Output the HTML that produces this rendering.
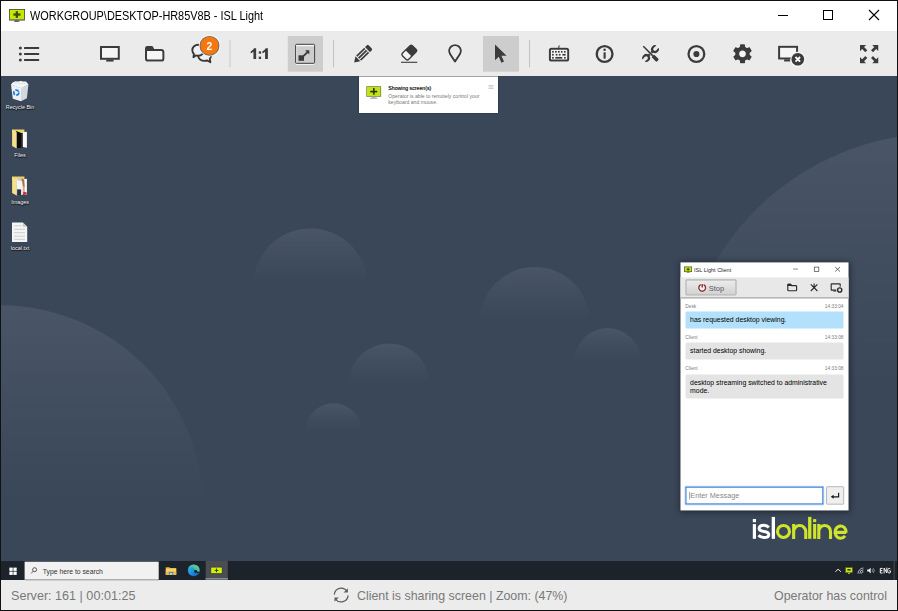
<!DOCTYPE html>
<html>
<head>
<meta charset="utf-8">
<title>ISL Light</title>
<style>
*{box-sizing:border-box;margin:0;padding:0}
html,body{width:898px;height:611px;overflow:hidden;background:#fff}
body{position:relative;font-family:"Liberation Sans",sans-serif;color:#000}
.abs{position:absolute}
#frame{position:absolute;left:0;top:0;width:898px;height:611px;border:1px solid #111;pointer-events:none;z-index:50}
#titlebar{position:absolute;left:1px;top:1px;width:896px;height:30px;background:#fff}
#title{position:absolute;left:29px;top:8px;font-size:12px;line-height:14px;white-space:nowrap;transform-origin:0 50%;transform:scaleX(.908);color:#000}
#toolbar{position:absolute;left:1px;top:31px;width:896px;height:45px;background:#ebebeb}
.tbact{position:absolute;top:5px;width:36px;height:36px;background:#cdcdcd}
.sep{position:absolute;top:9px;width:1px;height:28px;background:#c4c4c4}
.ico{position:absolute;overflow:visible}
#desk{position:absolute;left:1px;top:76px;width:896px;height:504px;background:#3a4759;overflow:hidden}
.bub{position:absolute;border-radius:50%}
#taskbar{position:absolute;left:0;top:485px;width:896px;height:19px;background:#1d232a}
#status{position:absolute;left:1px;top:580px;width:896px;height:30px;background:#ececec;color:#797979;font-size:12.4px;line-height:32px;white-space:nowrap}
.dl{position:absolute;color:#fff;font-size:5.4px;line-height:7px;white-space:nowrap;text-align:center;text-shadow:0 0 1px #000,0.5px 0.5px 1px #000}

#popup{position:absolute;left:357.7px;top:0;width:139.6px;height:36.6px;background:#fff;box-shadow:inset 0 1px 0 #a3a3a3,0 0 1.5px rgba(0,0,0,.5)}
#popup .t{position:absolute;left:29.6px;white-space:nowrap;font-size:5.2px;line-height:6.5px}
#cw{position:absolute;left:679px;top:186px;width:168px;height:247.5px;transform:translate(.5px,.4px);background:#fff;box-shadow:0 0 0 .6px #39424e,0 1px 6px 1px rgba(0,0,0,.45)}
#cw .tb{position:absolute;left:0;top:15px;width:168px;height:20.5px;background:#e8e8e8;border-bottom:1.2px solid #9b9b9b}
#cw .stop{position:absolute;left:5px;top:17.3px;width:51.4px;height:15.4px;border:.8px solid #a9a9a9;border-radius:1px;background:linear-gradient(#ececec,#d2d2d2)}
#cw .lbl{position:absolute;font-size:4.8px;line-height:6px;color:#7c7c7c;white-space:nowrap}
#cw .bb{position:absolute;left:4.9px;width:158.5px;border-radius:1.5px;background:#e4e4e4;font-size:6.88px;line-height:8px;color:#000;padding:4.9px 0 0 4.7px;white-space:nowrap}
</style>
</head>
<body>
<div id="titlebar">
  <div id="title">WORKGROUP\DESKTOP-HR85V8B - ISL Light</div>
</div>
<div id="toolbar"></div>
<div id="desk">
<svg class="abs" style="left:0;top:0" width="896" height="504" viewBox="1 76 896 504">
<defs><linearGradient id="bg" x1="0" y1="0" x2="0" y2="1"><stop offset="0" stop-color="#f4f7ff" stop-opacity=".084"/><stop offset=".25" stop-color="#f4f7ff" stop-opacity=".036"/><stop offset=".49" stop-color="#f4f7ff" stop-opacity="0"/></linearGradient></defs>
<circle cx="0" cy="508.6" r="203.3" fill="url(#bg)"/>
<circle cx="310.4" cy="285.5" r="57.1" fill="url(#bg)"/>
<circle cx="389.2" cy="383.9" r="40.5" fill="url(#bg)"/>
<circle cx="333.5" cy="431.3" r="28" fill="url(#bg)"/>
<circle cx="534.8" cy="322" r="55" fill="url(#bg)"/>
<circle cx="607.7" cy="361.6" r="33.5" fill="url(#bg)"/>
<circle cx="941" cy="395.5" r="262.3" fill="url(#bg)"/>

<!-- recycle bin -->
<g id="rbin">
<path d="M11,84.600 L21,88 L21,101.300 L12.800,98.800 Z" fill="#eef1f4"/>
<path d="M21,88 L28.400,84.600 L26.900,98.300 L21,101.300 Z" fill="#d3d8de"/>
<path d="M10.800,84.600 L13,82.300 L15.500,81.200 L18,81.600 L20.500,80.900 L23.500,81.600 L26,81.400 L28.500,84.600 L21,88.200 Z" fill="#f4f6f8"/>
<path d="M14,83.200 L17.500,82.600 L20,84 L23.500,82.800 L26,84" fill="none" stroke="#cfd4da" stroke-width=".6"/>
<circle cx="16.300" cy="92.600" r="2.500" fill="none" stroke="#1b7fe2" stroke-width="1.800" stroke-dasharray="3.900 1.340"/>
<circle cx="16.300" cy="92.600" r="1.200" fill="#eef1f4"/>
</g>
<!-- Files folder -->
<g id="ffold">
<path d="M12.100,129.500 L24.400,129.500 L24.400,133 L12.100,133 Z" fill="#efd06a"/>
<path d="M16.100,131 L23.200,133.800 L22.600,147.600 L16.500,148.300 Z" fill="#0a0a0a"/>
<path d="M21.400,134 L23,133 L22.800,147 L21.400,147.500 Z" fill="#555" opacity=".7"/>
<path d="M22.900,132.300 L26.900,131.800 L26.900,147.700 L22.900,146.900 Z" fill="#fbfbfb"/>
<path d="M12.100,129.800 L16.700,132.200 L16.700,148.500 L12.100,145.900 Z" fill="#f7e08d"/>
</g>
<!-- Images folder -->
<g id="ifold">
<path d="M12.100,176.500 L24.400,176.500 L24.400,180 L12.100,180 Z" fill="#efd06a"/>
<path d="M16.100,178 L23.200,180.600 L22.800,194.700 L16.500,195.300 Z" fill="#f4f4f6"/>
<path d="M22.900,179.300 L26.900,178.800 L26.900,194.700 L22.900,193.900 Z" fill="#fbfbfb"/>
<path d="M16.300,178.200 L21,178 L23.600,179.800 L22,181.200 L17.500,180.200 Z" fill="#cfc9c0"/>
<path d="M21.400,178.300 L24.200,179.500 L24.800,187 L23,187.500 L22.200,182 Z" fill="#b3703c"/>
<path d="M22.800,186.500 L24.600,186 L24.800,192.500 L23.200,192.500 Z" fill="#e8a070"/>
<path d="M17.200,189.300 L21.200,189.600 L21,195.100 L17,195.300 Z" fill="#2a3344"/>
<path d="M23.200,192 L26.600,192.300 L26.600,194.400 L23.200,194.200 Z" fill="#d8231c"/>
<path d="M12.100,176.800 L16.700,179.200 L16.700,195.500 L12.100,192.900 Z" fill="#f7e08d"/>
</g>
<!-- local.txt -->
<g id="ltxt">
<path d="M12,222.400 L22.800,222.400 L27.200,226.800 L27.200,242 L12,242 Z" fill="#f5f5f5"/>
<path d="M22.800,222.400 L22.800,226.800 L27.200,226.800 Z" fill="#c6c6c6"/>
<g stroke="#c2c2c2" stroke-width=".8"><path d="M14.200,225.800 h7.400 M14.200,229.300 h10.800 M14.200,232.700 h10.800 M14.200,236.200 h10.800 M14.200,239.300 h10.800"/></g>
</g>

</svg>
<div class="dl" style="left:-1px;top:28.100px;width:40px">Recycle Bin</div>
<div class="dl" style="left:-1px;top:75.700px;width:40px">Files</div>
<div class="dl" style="left:-1px;top:122.500px;width:40px">Images</div>
<div class="dl" style="left:-1px;top:169.400px;width:40px">local.txt</div>

<div id="popup">
<svg class="abs" style="left:0;top:0" width="140" height="37" viewBox="358.7 76 140 37">
<rect x="366.100" y="86.300" width="14.700" height="10.400" fill="#5d6a25"/>
<rect x="366.700" y="86.900" width="13.500" height="9.200" fill="#c0e31a"/>
<rect x="372.800" y="88" width="1.500" height="6.700" fill="#2c3000"/><rect x="370" y="90.800" width="6.900" height="1.600" fill="#2c3000"/>
<rect x="371.600" y="96.700" width="3.700" height="1.100" fill="#a9a9b8"/><rect x="369.800" y="97.800" width="7.500" height=".8" fill="#8d8d9f"/>
<rect x="488.200" y="85" width="5" height=".9" fill="#c9c9c9"/><rect x="488.200" y="86.500" width="5" height=".9" fill="#c9c9c9"/><rect x="488.200" y="88" width="5" height=".9" fill="#c9c9c9"/>
</svg>
<div class="t" style="top:8.700px;color:#2a2a2a;text-shadow:0 0 .2px #2e2e2e">Showing screen(s)</div>
<div class="t" style="top:16.600px;color:#777;font-size:5.120px">Operator is able to remotely control your<br>keyboard and mouse.</div>
</div>

<div id="cw">
<div class="tb"></div>
<div class="stop"></div>
<svg class="abs" style="left:0;top:0" width="168" height="248" viewBox="0 0 168 248">
<!-- title icon -->
<rect x="4" y="4.500" width="7.200" height="4.800" fill="#c1e612" stroke="#4a5418" stroke-width=".7"/>
<rect x="7.200" y="5.400" width=".8" height="3" fill="#222"/><rect x="6.100" y="6.500" width="3" height=".8" fill="#222"/>
<rect x="6.100" y="9.700" width="3" height=".6" fill="#555"/>
<!-- controls -->
<rect x="112.700" y="6.300" width="4.700" height=".7" fill="#555"/>
<rect x="133.800" y="4.700" width="4.500" height="4.400" fill="none" stroke="#444" stroke-width=".7"/>
<path d="M154.700,4.600 l4.800,4.600 M159.500,4.600 l-4.800,4.600" stroke="#333" stroke-width=".7" fill="none"/>
<!-- power icon -->
<circle cx="21.700" cy="25.300" r="4.600" fill="#f2f2f2" opacity=".8"/><g fill="none" stroke="#93333c" stroke-width="1.450"><path d="M20.300,22.300 a3.400,3.400 0 1 0 2.800,0"/><path d="M21.700,21.600 v3.500"/></g>
<!-- toolbar icons -->
<g fill="none" stroke="#2c2c2c" stroke-width="1.150">
<path d="M107.300,22.600 a.7,.7 0 0 1 .7,-.7 h2.200 l.9,1.300 h4.300 a.7,.7 0 0 1 .7,.7 v3.800 a.7,.7 0 0 1 -.7,.7 h-7.400 a.7,.7 0 0 1 -.7,-.7 z"/>
<path d="M130.300,22 l6.600,6.600 M136.900,22 l-6.600,6.600 M133.600,21 v4.300" stroke-width="1.150"/>
<rect x="150.700" y="21.500" width="9" height="6.200" rx=".4"/>
</g>
<path d="M106.900,23.500 v-1.300 a.8,.8 0 0 1 .8,-.8 h2.600 l1.300,2.100 z" fill="#2c2c2c"/>
<rect x="152.800" y="28.100" width="3.400" height="1" fill="#2c2c2c"/>
<circle cx="159.200" cy="27.600" r="3.500" fill="#e8e8e8"/><circle cx="159.200" cy="27.600" r="2.100" fill="none" stroke="#2c2c2c" stroke-width="1.400"/>
<!-- input -->
<rect x="5.400" y="224.700" width="137" height="16.900" fill="#fff" stroke="#2a73d6" stroke-width="1.150"/>
<rect x="4.600" y="223.900" width="138.600" height="18.500" fill="none" stroke="#8dbaf0" stroke-width=".7" rx=".8"/>
<rect x="8.500" y="229.400" width=".5" height="7.600" fill="#555"/>
<!-- send -->
<rect x="146" y="224.300" width="17.200" height="17.500" fill="#efefef" stroke="#9d9d9d" stroke-width=".7" rx=".6"/>
<path d="M158.100,230.400 V234.400 H152.500" fill="none" stroke="#1a1a1a" stroke-width="1.200"/><path d="M150.200,234.400 l2.900,-2 v4 z" fill="#1a1a1a"/>
</svg>
<div class="abs" style="left:13.600px;top:4.500px;font-size:5.500px;line-height:7px;white-space:nowrap;color:#2a2a2a">ISL Light Client</div>
<div class="abs" style="left:28.200px;top:21.700px;font-size:7.500px;line-height:9px;white-space:nowrap;color:#5a5a5a">Stop</div>
<div class="lbl" style="left:4.800px;top:41.500px">Desk</div><div class="lbl" style="right:5px;top:41.500px">14:33:04</div>
<div class="bb" style="top:49.100px;height:16.500px;background:#b3e0fb">has requested desktop viewing.</div>
<div class="lbl" style="left:4.800px;top:73px">Client</div><div class="lbl" style="right:5px;top:73px">14:33:08</div>
<div class="bb" style="top:80.200px;height:16.500px;padding-top:5.300px">started desktop showing.</div>
<div class="lbl" style="left:4.800px;top:104.200px">Client</div><div class="lbl" style="right:5px;top:104.200px">14:33:08</div>
<div class="bb" style="top:111.600px;height:24.500px;padding-top:5.700px">desktop streaming switched to administrative<br>mode.</div>
<div class="abs" style="left:9.800px;top:229.200px;font-size:7.300px;line-height:9px;white-space:nowrap;color:#888">Enter Message</div>
</div>

<svg class="abs" style="left:745px;top:436px" width="110" height="34" viewBox="746 512 110 34">
<g fill="#fff"><rect x="752.800" y="524.100" width="3.200" height="14.700"/><rect x="752.800" y="519" width="3.200" height="3.200"/><rect x="771.700" y="516.900" width="3.300" height="21.900"/></g>
<path d="M768.800,527.500 C767.600,526 765.900,525.300 763.900,525.300 C761,525.300 759.100,526.500 759.100,528.500 C759.100,530.400 760.800,531 764,531.400 C767.300,531.800 768.800,532.700 768.800,534.600 C768.800,536.600 766.900,537.600 764,537.600 C761.700,537.600 759.800,536.800 758.500,535.300" fill="none" stroke="#fff" stroke-width="3"/>
<g fill="#cfe42a"><rect x="808.100" y="516.900" width="3.300" height="21.900"/><rect x="813.100" y="524" width="3.100" height="14.800"/><rect x="813.100" y="519.100" width="3.100" height="3"/></g>
<g fill="none" stroke="#cfe42a" stroke-width="3.100">
<circle cx="783.500" cy="531.450" r="6"/>
<path d="M793.650,524 V538.900 M793.650,531.600 a6.050,6.050 0 0 1 12.100,0 V538.900"/>
<path d="M818.800,524 V538.900 M818.800,531.300 a5.850,5.850 0 0 1 11.700,0 V538.900"/>
<path d="M835.200,532.400 H846.200 M846.150,532.600 A5.550,6.100 0 1 0 845,535.900"/>
</g>
</svg>
<div id="taskbar">
<svg class="abs" style="left:0;top:0" width="896" height="19" viewBox="1 561 896 19">
<g fill="#fff"><rect x="9.400" y="567.600" width="3.300" height="3.300"/><rect x="13.400" y="567.600" width="3.300" height="3.300"/><rect x="9.400" y="571.600" width="3.300" height="3.300"/><rect x="13.400" y="571.600" width="3.300" height="3.300"/></g>
<rect x="24.600" y="561.700" width="134.100" height="17.600" fill="#f1f1f1"/><rect x="24.600" y="579.200" width="134.100" height=".8" fill="#c4c4c4"/>
<circle cx="34.600" cy="569.700" r="2" fill="none" stroke="#333" stroke-width=".8"/><path d="M33.200,571.200 l-2,2.200" stroke="#333" stroke-width=".8"/>
<!-- explorer -->
<path d="M165.800,567.200 h3.600 l.8,.8 h6 v6.800 h-10.400 z" fill="#e9a93a"/>
<rect x="165.800" y="568.600" width="10.400" height="6.200" fill="#f8d26a"/>
<rect x="165.800" y="571.600" width="10.400" height="3.200" fill="#f2b73c"/>
<rect x="168.800" y="571.800" width="4.400" height="3" fill="#3b8fe0"/><rect x="169.900" y="573" width="2.200" height="1.800" fill="#f8d26a"/>
<!-- edge -->
<defs><linearGradient id="eg" x1="0" y1="0" x2="1" y2="1"><stop offset="0" stop-color="#35c1f1"/><stop offset=".5" stop-color="#1f8fe0"/><stop offset="1" stop-color="#0c59a4"/></linearGradient>
<linearGradient id="eg2" x1="0" y1="1" x2="1" y2="0"><stop offset="0" stop-color="#1b9de2"/><stop offset="1" stop-color="#6fdc6a"/></linearGradient></defs>
<circle cx="193.800" cy="570.400" r="5.900" fill="url(#eg)"/>
<path d="M188.100,569 a5.900,5.900 0 0 1 11.500,1 c0,2 -1.600,2.900 -3.300,2.900 c-1.600,0 -2.600,-.6 -2.600,-1.300 c0,-.7 .8,-.9 .8,-2 c0,-1.300 -1.300,-2.300 -3,-2.300 c-1.500,0 -2.800,.7 -3.400,1.700 z" fill="url(#eg2)"/>
<path d="M194.300,571.300 a1.500,1.500 0 0 0 2.600,1 l2.200,-.4 l-1.500,2 a5,5 0 0 1 -3,1 z" fill="#1d232a" opacity=".0"/><circle cx="195.600" cy="571.300" r="1.600" fill="#1d232a"/><path d="M195.600,572.900 h3.800 l-1.200,-1.700 z" fill="#1d232a"/>
<!-- isl active -->
<rect x="205.700" y="561" width="22.100" height="18.500" fill="#4a4e53"/>
<rect x="205.500" y="578.300" width="22.500" height="1.200" fill="#9fa4a9"/>
<rect x="210.800" y="567.100" width="11.400" height="6.600" fill="#d3ee0a" stroke="#2d3140" stroke-width=".7"/>
<rect x="216" y="568.600" width="1" height="3.600" fill="#3a3d00"/><rect x="214.700" y="569.900" width="3.600" height="1" fill="#3a3d00"/>
<!-- tray -->
<path d="M835.300,571.800 l2.800,-2.600 l2.800,2.600" fill="none" stroke="#fff" stroke-width=".9"/>
<rect x="845.600" y="567.600" width="6.800" height="5" fill="#cfe915" stroke="#59661b" stroke-width=".5"/><rect x="847.400" y="569" width="3.200" height="1.600" fill="#333"/><rect x="848" y="573" width="2" height=".8" fill="#c4e021"/>
<g fill="none" stroke="#dfe3e8" stroke-width=".8"><path d="M858,573.600 a5.600,5.600 0 0 1 5.400,-5.600"/><path d="M859.800,573.600 a3.800,3.800 0 0 1 3.600,-3.800"/><path d="M861.500,573.600 a2,2 0 0 1 1.900,-2"/></g>
<path d="M867.200,569.600 h1.500 l2,-1.800 v5.600 l-2,-1.800 h-1.500 z" fill="#e8ebee"/><path d="M872,569.200 a2,2 0 0 1 0,2.800 M873.200,568.200 a3.500,3.500 0 0 1 0,4.800" fill="none" stroke="#cfd3d8" stroke-width=".6"/>
<g fill="none" stroke="#fff" stroke-width=".95">
<path d="M882.600,568.400 h-2.300 v4.600 h2.300 M880.300,570.600 h2"/>
<path d="M884.100,573.400 v-5.400 l2.700,5 v-5.400" stroke-linejoin="bevel"/>
<path d="M890.500,569.200 a1.600,1.600 0 0 0 -1.300,-.8 c-1,0 -1.500,.9 -1.500,2.300 c0,1.400 .5,2.300 1.500,2.300 c.7,0 1.300,-.4 1.300,-1 v-1.100 h-1.300"/>
</g>
<rect x="893.800" y="561" width=".6" height="19" fill="#5d646d"/>
</svg>
<div class="abs" style="left:41.800px;top:6px;font-size:6.800px;line-height:9px;white-space:nowrap;color:#333">Type here to search</div>

</div>
</div>
<div id="status"><div class="abs" style="left:23.600px;top:0;width:134.100px;height:.7px;background:#cfcfcf"></div>
  <span class="abs" style="left:10px;font-size:12.600px">Server: 161 | 00:01:25</span>
  <svg class="abs" style="left:332px;top:7px" width="18" height="16" viewBox="333 587 18 16">
<g fill="none" stroke="#5e5e5e" stroke-width="1.200">
<path d="M334.300,594.600 a6.900,6.900 0 0 1 12.700,-3.300"/>
<path d="M348.100,595.400 a6.900,6.900 0 0 1 -12.700,3.300"/>
</g>
<path d="M347.900,588.300 v4.300 h-4.300 z" fill="#5e5e5e"/>
<path d="M334.500,601.700 v-4.300 h4.300 z" fill="#5e5e5e"/>
</svg>
<span class="abs" style="left:356px">Client is sharing screen | Zoom: (47%)</span>
  <span class="abs" style="right:10px">Operator has control</span>
</div>
<svg class="abs" style="left:0;top:0;z-index:5" width="898" height="76" viewBox="0 0 898 76">
<g fill="#3b3b3b" stroke="none" style="filter:drop-shadow(0 0 .7px #fff) drop-shadow(0 0 .6px rgba(255,255,255,.85))">
<!-- title icon -->
<g id="ticon">
<rect x="9" y="9" width="16" height="11.400" fill="#45454d"/>
<rect x="9.800" y="9.800" width="14.400" height="9.600" fill="#c4e800"/>
<rect x="9" y="19.400" width="16" height="1.100" fill="#858585"/>
<rect x="15.700" y="11.200" width="2.300" height="6.700" fill="#454a00"/><rect x="13.400" y="13.400" width="7.100" height="2.300" fill="#454a00"/>
<rect x="13.900" y="20.500" width="5.800" height="1.200" fill="#777"/><rect x="15" y="20.500" width="3.400" height="1.200" fill="#4a4a4a"/>
</g>
<!-- window controls -->
<rect x="778" y="15" width="10" height="1" fill="#000"/>
<rect x="823.5" y="10.5" width="9" height="9" fill="none" stroke="#000" stroke-width="1"/>
<path d="M869,10 L879,20 M879,10 L869,20" stroke="#000" stroke-width="1.1" fill="none"/>
<!-- list -->
<circle cx="20.4" cy="48" r="1.5"/><circle cx="20.4" cy="54" r="1.5"/><circle cx="20.4" cy="60" r="1.5"/>
<rect x="24" y="47" width="15.2" height="2" rx=".6"/><rect x="24" y="53" width="15.2" height="2" rx=".6"/><rect x="24" y="59" width="15.2" height="2" rx=".6"/>
<!-- monitor -->
<rect x="101" y="47" width="17.800" height="11.800" fill="#f6f6f6" stroke="#3b3b3b" stroke-width="2"/>
<rect x="106.200" y="59.600" width="7.400" height="2"/>
<!-- folder -->
<path d="M146,50 h15.200 a2.200,2.200 0 0 1 2.200,2.200 v6.200 a2.200,2.200 0 0 1 -2.200,2.200 h-13 a2.200,2.200 0 0 1 -2.200,-2.200 z" fill="#f6f6f6" stroke="#3b3b3b" stroke-width="2" stroke-linejoin="round"/>
<path d="M145,50.600 v-2.400 a2.200,2.200 0 0 1 2.200,-2.200 h4.400 a1.800,1.800 0 0 1 1.600,1 l1.200,2.400 v1.200 z"/>
<!-- chat -->
<g stroke="#363636" stroke-width="1.900" stroke-linejoin="round">
<path d="M198.200,56 A6.400,4.900 0 0 0 204.600,60.900 C205.600,60.900 206.500,60.800 207.300,60.500 L210.400,62.300 L209.800,58.900 A5,4.900 0 0 0 211,56 A6.400,4.900 0 0 0 198.200,56 Z" fill="#f0f0f0"/>
<path transform="translate(.5,0)" d="M197.700,44.700 A5.900,5.500 0 0 1 203.600,50.200 A5.900,5.500 0 0 1 197.700,55.700 C196.900,55.700 196.100,55.600 195.400,55.400 L192.900,57.300 L193.400,53.900 A5.500,5.500 0 0 1 191.800,50.200 A5.900,5.500 0 0 1 197.700,44.700 Z" fill="#f0f0f0"/>
</g>
<circle cx="209.500" cy="45.800" r="10.700" fill="#f1f1f1"/>
<circle cx="209.500" cy="45.800" r="9.900" fill="#5b6470"/>
<circle cx="209.500" cy="45.800" r="9.200" fill="#f4770f"/>
<text x="209.300" y="50.100" style="font-family:'Liberation Sans',sans-serif;font-weight:bold;font-size:10.200px" fill="#fff" text-anchor="middle">2</text>
<!-- separators -->
<rect x="229.400" y="40" width="1.200" height="27.500" fill="#c2c2c2"/>
<rect x="332.900" y="40" width="1.200" height="27.500" fill="#c2c2c2"/>
<rect x="528.900" y="40" width="1.200" height="27.500" fill="#c2c2c2"/>
<!-- 1:1 -->
<path d="M256.2,48.2 L256.2,59.0 L253.40,59.0 L253.40,51.80 C252.60,52.60 251.60,53.20 250.70,53.50 L250.70,51.20 C252.20,50.60 253.30,49.50 253.90,48.2 Z"/><path d="M267.9,48.2 L267.9,59.0 L265.10,59.0 L265.10,51.80 C264.30,52.60 263.30,53.20 262.40,53.50 L262.40,51.20 C263.90,50.60 265.00,49.50 265.60,48.2 Z"/><rect x="258.7" y="51.3" width="2.4" height="2.4"/><rect x="258.7" y="56.6" width="2.4" height="2.4"/>
<!-- active zoom-fit -->
<rect x="287.500" y="36" width="35.600" height="35.800" fill="#cdcdcd"/>
<rect x="295.600" y="44.300" width="19" height="19" rx="1" fill="none" stroke="#404040" stroke-width="1"/>
<rect x="296.300" y="45" width="17.600" height="1.200" fill="#fff" opacity=".92"/>
<rect x="296.200" y="46" width=".9" height="16.600" fill="#fff" opacity=".45"/>
<rect x="296" y="64" width="18.200" height=".9" fill="#fff" opacity=".8"/>
<rect x="298.500" y="55.300" width="5.500" height="5.500"/>
<path d="M303.400,56.200 L307.800,51.800" stroke="#3b3b3b" stroke-width="1.800" fill="none"/>
<path d="M305.100,50.300 h4.200 v4.200 z"/>
<!-- pencil -->
<g transform="translate(354.100,62.500) rotate(-44)">
<path d="M0,0 L5.300,-3.500 L5.300,3.500 Z"/>
<rect x="6.300" y="-3.600" width="11.200" height="7.200"/>
<rect x="6.300" y="-1.900" width="11.200" height="1" fill="#ebebeb"/>
<rect x="6.300" y=".9" width="11.200" height="1" fill="#ebebeb"/>
<path d="M18.600,-3.600 h2.300 a1.600,1.600 0 0 1 1.600,1.600 v4 a1.600,1.600 0 0 1 -1.600,1.600 h-2.300 z"/>
</g>
<!-- eraser -->
<g transform="translate(409.300,52.600) rotate(-45)">
<rect x="-7.100" y="-4.400" width="14.200" height="8.800" rx="2" fill="#f3f3f3" stroke="#3b3b3b" stroke-width="1.400"/>
<path d="M-1,-4.400 h6.100 a2,2 0 0 1 2,2 v4.800 a2,2 0 0 1 -2,2 h-6.100 z"/>
</g>
<rect x="401" y="61.700" width="16.400" height="1.150"/>
<!-- pin -->
<path d="M455,61.500 L450.200,54.200 A5.800,5.800 0 1 1 459.800,54.200 Z" fill="none" stroke="#3b3b3b" stroke-width="2" stroke-linejoin="round"/>
<!-- active cursor -->
<rect x="483" y="36" width="36" height="35.800" fill="#cdcdcd"/>
<path d="M495,44.500 L495,60.300 L498.800,56.800 L501.400,62.700 L504,61.500 L501.400,55.800 L506.600,55.800 Z"/>
<!-- keyboard -->
<rect x="549.900" y="48.700" width="18.300" height="11.900" rx="1.600" fill="#f7f7f7" stroke="#3b3b3b" stroke-width="2"/>
<path d="M558.600,48 L559.300,45.400" stroke="#3b3b3b" stroke-width="1.100" fill="none"/>
<g><rect x="552.05" y="50.95" width="1.7" height="1.7"/><rect x="555.00" y="50.95" width="1.7" height="1.7"/><rect x="557.95" y="50.95" width="1.7" height="1.7"/><rect x="560.90" y="50.95" width="1.7" height="1.7"/><rect x="563.95" y="50.95" width="1.7" height="1.7"/><rect x="552.05" y="53.90" width="1.7" height="1.7"/><rect x="555.75" y="53.90" width="1.7" height="1.7"/><rect x="558.85" y="53.90" width="1.7" height="1.7"/><rect x="562.35" y="53.90" width="3.3" height="1.7"/><rect x="552.05" y="56.95" width="1.7" height="1.7"/><rect x="555.30" y="56.95" width="7.0" height="1.7"/><rect x="564.05" y="56.95" width="1.7" height="1.7"/></g>
<!-- info -->
<circle cx="604.600" cy="54" r="7.900" fill="none" stroke="#3b3b3b" stroke-width="2.400"/>
<circle cx="604.600" cy="49.800" r="1.300"/><rect x="603.500" y="52.300" width="2.200" height="6.400"/>
<!-- tools -->
<g id="tools">
<g transform="translate(650.550,53.550) rotate(-45)">
<rect x="-5.500" y="-1.200" width="11" height="2.400"/>
<circle cx="6.200" cy="0" r="3.900"/><circle cx="-6.200" cy="0" r="3.900"/>
<rect x="6" y="-1.650" width="5" height="3.300" fill="#ebebeb"/><rect x="-11" y="-1.650" width="5" height="3.300" fill="#ebebeb"/><circle cx="6.200" cy="0" r="1.700" fill="#ebebeb"/><circle cx="-6.200" cy="0" r="1.700" fill="#ebebeb"/>
</g>
<g transform="translate(650.550,53.550) rotate(45)">
<rect x="-2.200" y="-2.300" width="4.400" height="4.600" fill="#ebebeb"/>
<rect x="-10.400" y="-.8" width="13.500" height="1.600" rx=".5"/>
<rect x="3" y="-1.850" width="7.200" height="3.700" rx="1.200"/>
</g>
<g transform="translate(650.550,53.550) rotate(-45)"><rect x="-2.600" y="-1.200" width="1.400" height="2.400"/><rect x="1.200" y="-1.200" width="1.400" height="2.400"/></g>
</g>
<!-- record -->
<circle cx="696.400" cy="54" r="7.900" fill="none" stroke="#3b3b3b" stroke-width="2.300"/>
<circle cx="696.400" cy="54" r="3.100"/>
<!-- gear -->
<g id="gear" transform="translate(742.500,53.800)"><circle r="4" fill="#f4f4f4"/><path d="M-2.01,-6.39 L-1.79,-8.82 L1.79,-8.82 L2.01,-6.39 L4.53,-4.94 L6.74,-5.96 L8.53,-2.86 L6.54,-1.45 L6.54,1.45 L8.53,2.86 L6.74,5.96 L4.53,4.94 L2.01,6.39 L1.79,8.82 L-1.79,8.82 L-2.01,6.39 L-4.53,4.94 L-6.74,5.96 L-8.53,2.86 L-6.54,1.45 L-6.54,-1.45 L-8.53,-2.86 L-6.74,-5.96 L-4.53,-4.94 Z M4.05,0 a4.05,4.05 0 1 0 -8.10,0 a4.05,4.05 0 1 0 8.10,0 Z" fill-rule="evenodd" stroke="#3b3b3b" stroke-width="1.300" stroke-linejoin="round"/></g>
<!-- monitor-x -->
<rect x="779.100" y="46.800" width="18" height="11.700" fill="#f5f5f5" stroke="#3b3b3b" stroke-width="2"/>
<rect x="784.100" y="59.400" width="6.200" height="2.100"/>
<circle cx="797.800" cy="59.300" r="7.500" fill="#f0f0f0"/>
<circle cx="797.800" cy="59.300" r="6.300"/>
<path d="M795.500,57 l4.600,4.600 M800.100,57 l-4.600,4.600" stroke="#fff" stroke-width="1.800" fill="none"/>
<!-- fullscreen -->
<g id="fs">
<path d="M860,45 h6.200 l-2.100,2.100 l3.200,3.200 l-2,2 l-3.200,-3.200 l-2.100,2.100 z"/>
<path d="M878.300,45 v6.200 l-2.100,-2.100 l-3.200,3.200 l-2,-2 l3.200,-3.200 l-2.100,-2.100 z"/>
<path d="M860,63.300 v-6.200 l2.100,2.100 l3.200,-3.200 l2,2 l-3.200,3.200 l2.100,2.100 z"/>
<path d="M878.300,63.300 h-6.200 l2.100,-2.100 l-3.200,-3.200 l2,-2 l3.200,3.200 l2.100,-2.100 z"/>
</g>
</g>
</svg>
<div id="frame"></div>
</body>
</html>
